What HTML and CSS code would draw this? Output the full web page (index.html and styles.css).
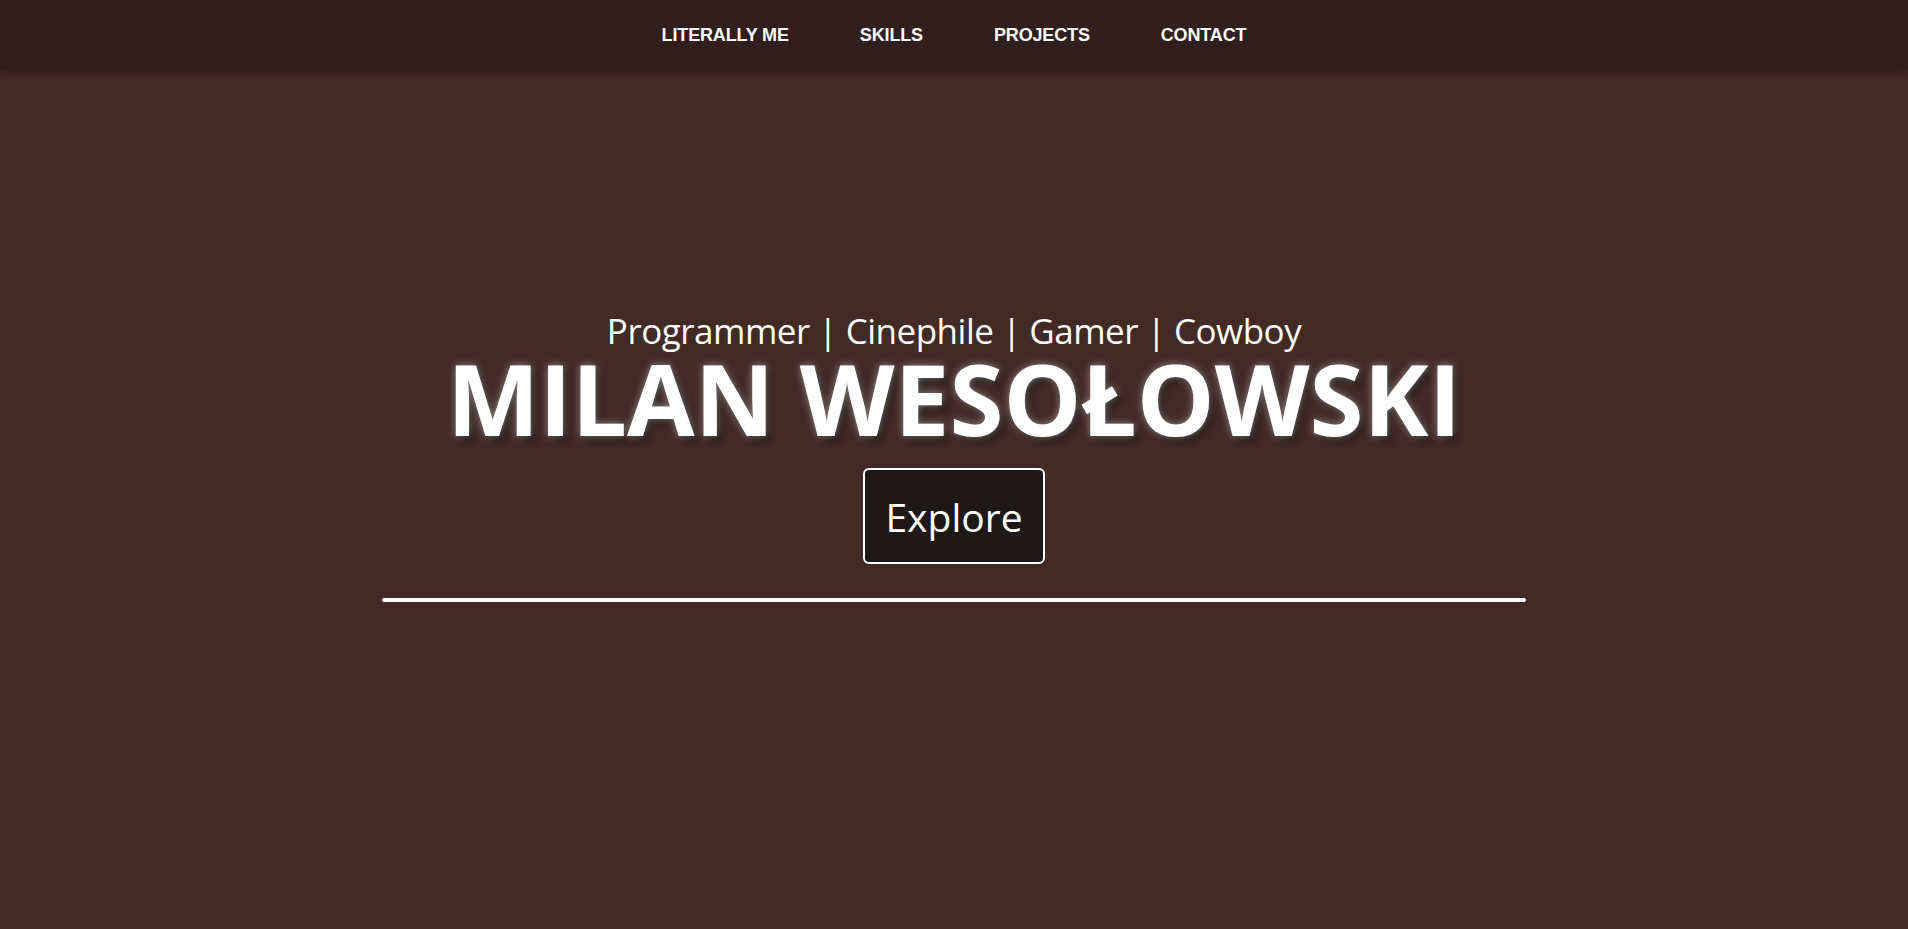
FILE: index.html
```html
<!DOCTYPE html>
<html lang="en">
<head>
<meta charset="utf-8">
<title>Milan Wesołowski</title>
<link rel="stylesheet" href="styles.css">
</head>
<body>
<nav class="topnav">
  <ul class="topnav-list">
    <li><a href="#about" class="topnav-link">LITERALLY ME</a></li>
    <li><a href="#skills" class="topnav-link">SKILLS</a></li>
    <li><a href="#projects" class="topnav-link">PROJECTS</a></li>
    <li><a href="#contact" class="topnav-link">CONTACT</a></li>
  </ul>
</nav>
<main class="hero">
  <p class="hero-subtitle">Programmer | Cinephile | Gamer | Cowboy</p>
  <h1 class="hero-name">MILAN WESOŁOWSKI</h1>
  <a href="#about" class="hero-button">Explore</a>
  <hr class="hero-rule">
</main>
</body>
</html>
```
FILE: styles.css
```css
html, body {
  margin: 0;
  padding: 0;
}
body {
  background: #422a25;
  color: #ffffff;
  font-family: "Open Sans", "Liberation Sans", sans-serif;
  min-height: 100vh;
}
.topnav {
  height: 70px;
  background: #301f1d;
  box-shadow: 0 2px 8px rgba(0, 0, 0, 0.35);
  display: flex;
  align-items: center;
}
.topnav-list {
  list-style: none;
  margin: 0;
  padding: 0;
  width: 100%;
  display: flex;
  justify-content: center;
  gap: 71px;
}
.topnav-link {
  color: #ffffff;
  text-decoration: none;
  font-family: "Liberation Sans", Arial, sans-serif;
  font-weight: 700;
  font-size: 18px;
  letter-spacing: -0.15px;
  line-height: 1;
}
.hero {
  display: flex;
  flex-direction: column;
  align-items: center;
  padding-top: 243px;
}
.hero-subtitle {
  margin: 0;
  font-size: 35px;
  letter-spacing: -0.5px;
  line-height: 1;
  color: #ffffff;
}
.hero-name {
  margin: 1px 0 0;
  font-size: 98px;
  line-height: 1;
  font-weight: 700;
  letter-spacing: 0;
  color: #ffffff;
  text-shadow: 0 0 8px rgba(255, 255, 255, 0.45), 4px 5px 6px rgba(0, 0, 0, 0.55);
}
.hero-button {
  margin-top: 21px;
  box-sizing: border-box;
  width: 182px;
  height: 96px;
  display: flex;
  align-items: center;
  justify-content: center;
  background: #1e1816;
  border: 2px solid #ffffff;
  border-radius: 6px;
  color: #ffffff;
  text-decoration: none;
  font-size: 39px;
  line-height: 1;
}
.hero-rule {
  margin: 34px 0 0;
  width: 60%;
  height: 4px;
  border: none;
  border-radius: 2px;
  background: #ffffff;
}
```
